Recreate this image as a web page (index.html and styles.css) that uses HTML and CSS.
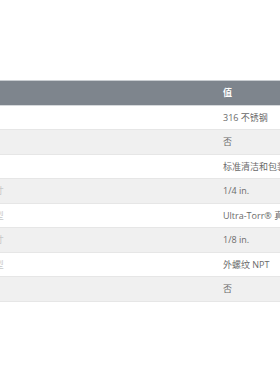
FILE: index.html
```html
<!DOCTYPE html>
<html lang="zh-CN">
<head>
<meta charset="utf-8">
<title>产品规格</title>
<link rel="stylesheet" href="styles.css">
</head>
<body>
<div class="viewport">
  <table class="spec">
    <colgroup>
      <col class="col-label">
      <col class="col-value">
    </colgroup>
    <thead>
      <tr><th>属性</th><th>值</th></tr>
    </thead>
    <tbody>
      <tr><td>主体材料</td><td>316 不锈钢</td></tr>
      <tr><td>清洁</td><td>否</td></tr>
      <tr><td>工艺</td><td>标准清洁和包装</td></tr>
      <tr><td>连接 1 尺寸</td><td>1/4 in.</td></tr>
      <tr><td>连接 1 类型</td><td>Ultra-Torr® 真空接头</td></tr>
      <tr><td>连接 2 尺寸</td><td>1/8 in.</td></tr>
      <tr><td>连接 2 类型</td><td>外螺纹 NPT</td></tr>
      <tr><td>氧气</td><td>否</td></tr>
    </tbody>
  </table>
</div>
</body>
</html>
```

FILE: styles.css
```css
html, body {
  margin: 0;
  padding: 0;
  background: #ffffff;
}
.viewport {
  width: 280px;
  height: 380px;
  overflow: hidden;
  padding-top: 80px;
  box-sizing: border-box;
}
.spec {
  margin-left: -50px;
  border-collapse: collapse;
  table-layout: fixed;
  width: 400px;
  font-family: "Open Sans", "Noto Sans CJK SC", sans-serif;
  font-size: 9px;
  color: #6a6a6a;
}
.col-label { width: 265px; }
.col-value { width: 135px; }
.spec th, .spec td {
  height: 23.5px;
  padding: 0 8px;
  text-align: left;
  white-space: nowrap;
  overflow: hidden;
  border-bottom: 1px solid #e6e6e6;
}
.spec th {
  background: #7e858d;
  color: #ffffff;
  font-weight: bold;
  border-top: 1px solid #c9cdd1;
  border-bottom: 1px solid #d6d9dc;
}
.spec tbody tr:nth-child(even) td {
  background: #f0f0f0;
}
.spec td:first-child {
  color: #c8c8c8;
}
```
